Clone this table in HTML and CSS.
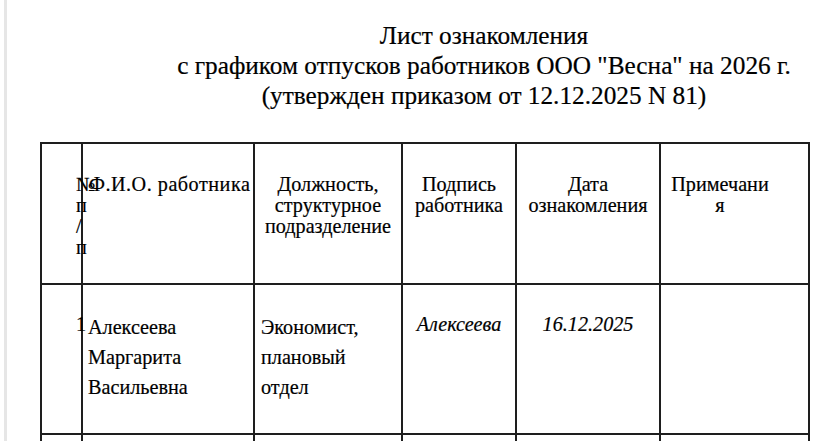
FILE: index.html
```html
<!DOCTYPE html>
<html lang="en">
<head>
<meta charset="utf-8">
<title>Sheet</title>
<link rel="stylesheet" href="styles.css">
</head>
<body>
<div class="doc">
  <div class="title">
    <p class="title-line">Лист ознакомления</p>
    <p class="title-line">с графиком отпусков работников ООО "Весна" на 2026 г.</p>
    <p class="title-line">(утвержден приказом от 12.12.2025 N 81)</p>
  </div>
  <table class="sheet">
    <colgroup>
      <col class="c-num">
      <col class="c-name">
      <col class="c-pos">
      <col class="c-sign">
      <col class="c-date">
      <col class="c-note">
    </colgroup>
    <tr class="head">
      <td class="cell num">№ п/п</td>
      <td class="cell fio">Ф.И.О. работника</td>
      <td class="cell center">Должность, структурное подразделение</td>
      <td class="cell center">Подпись работника</td>
      <td class="cell center">Дата ознакомления</td>
      <td class="cell note">Примечания</td>
    </tr>
    <tr class="data">
      <td class="cell num num-data">1</td>
      <td class="cell left name">Алексеева Маргарита Васильевна</td>
      <td class="cell left pos">Экономист, плановый отдел</td>
      <td class="cell center sign">Алексеева</td>
      <td class="cell center date">16.12.2025</td>
      <td class="cell"></td>
    </tr>
    <tr class="data">
      <td class="cell num num-data"></td>
      <td class="cell left name"></td>
      <td class="cell left"></td>
      <td class="cell"></td>
      <td class="cell"></td>
      <td class="cell"></td>
    </tr>
  </table>
</div>
</body>
</html>
```

FILE: styles.css
```css
body {
  margin: 0;
  padding: 0 0 0 4px;
  font-family: "Liberation Serif", serif;
  color: #000;
}
.doc {
  border-left: 3px solid #e6e6e6;
  height: 441px;
  overflow: hidden;
  box-sizing: border-box;
}
.title {
  padding-top: 20px;
  padding-left: 121px;
  text-align: center;
}
.title-line {
  margin: 0;
  font-family: "Liberation Serif", serif;
  font-size: 25.3px;
  line-height: 30px;
  -webkit-text-stroke: 0.2px #000;
}
.sheet {
  margin-top: 32px;
  margin-left: 33px;
  border-collapse: collapse;
  table-layout: fixed;
  width: 770px;
}
.cell {
  font-family: "Liberation Serif", serif;
  font-size: 20.2px;
  border: 2px solid #1e1e1e;
  vertical-align: top;
  padding: 0;
  -webkit-text-stroke: 0.2px #000;
}
.c-num { width: 41px; }
.c-name { width: 172px; }
.c-pos { width: 148px; }
.c-sign { width: 114px; }
.c-date { width: 144px; }
.c-note { width: 149px; }

.head .cell {
  height: 141px;
  padding-top: 30px;
  line-height: 21px;
  box-sizing: border-box;
}
.data .cell {
  height: 150px;
  padding-top: 27px;
  line-height: 30px;
  box-sizing: border-box;
}
.center {
  text-align: center;
}
.fio {
  padding-left: 6px !important;
  text-align: left;
  white-space: nowrap;
  letter-spacing: 0.5px;
}
.left {
  padding-left: 6px !important;
  text-align: left;
}
.left.name {
  padding-left: 5px !important;
}
.left.pos {
  padding-right: 30px !important;
}
.num {
  padding-left: 34px !important;
  word-break: break-all;
  line-break: anywhere;
  overflow: visible;
}
.data .num-data {
  line-height: 26px;
  padding-top: 26px !important;
}
.note {
  padding-left: 9px !important;
  padding-right: 38px !important;
  text-align: center;
  word-break: break-all;
}
.data .sign {
  font-style: italic;
  line-height: 24px;
}
.data .date {
  font-style: italic;
  line-height: 24px;
}
```
